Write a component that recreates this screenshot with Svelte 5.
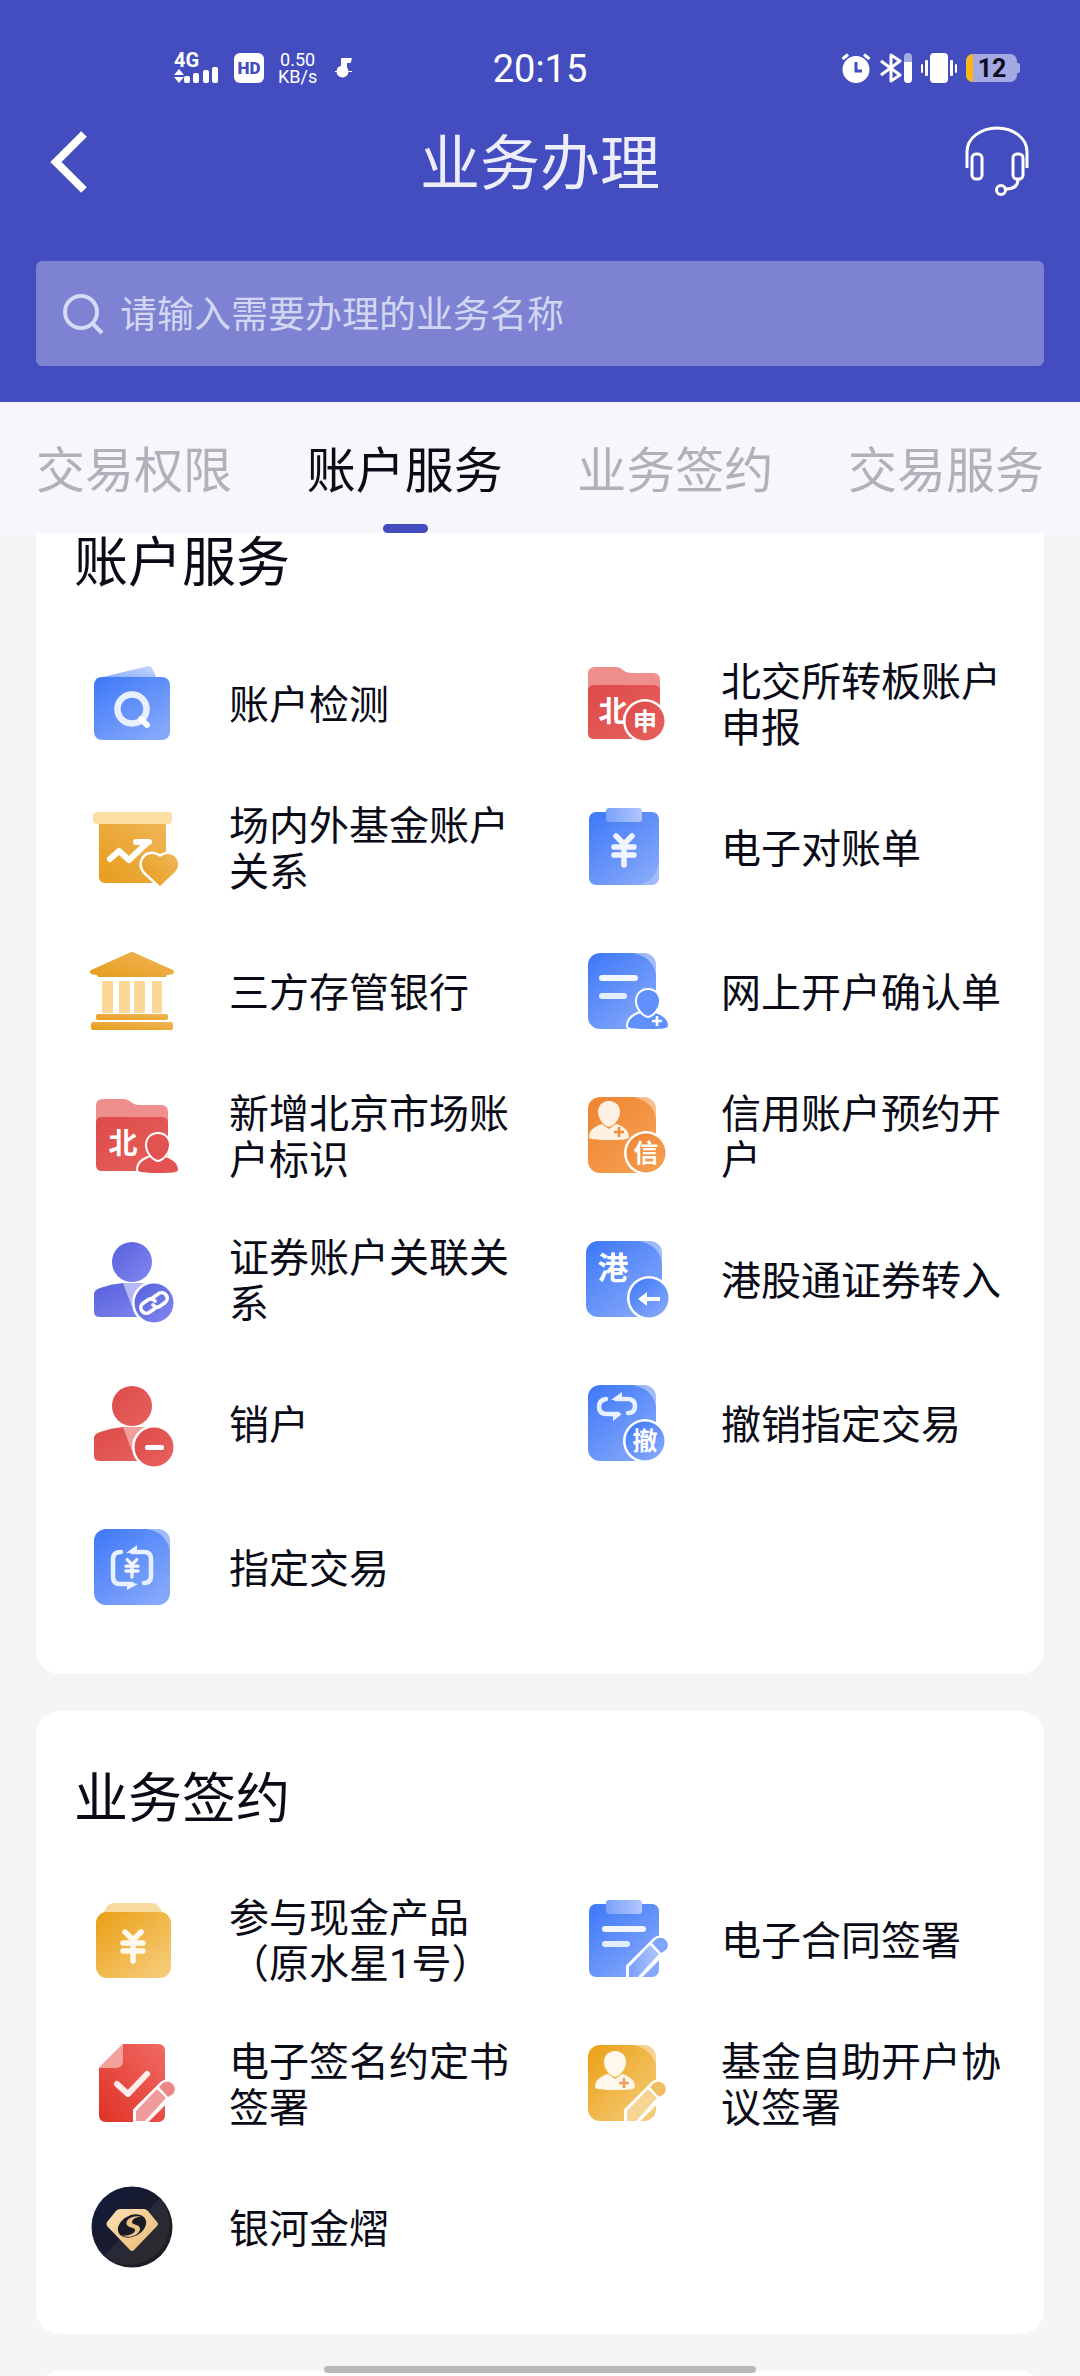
<script lang="ts">
  interface Service {
    label: string;
    icon: string;
  }

  interface Group {
    title: string;
    items: Service[];
  }

  const tabs = ['交易权限', '账户服务', '业务签约', '交易服务'];

  const groups: Group[] = [
    {
      title: '账户服务',
      items: [
        { label: '账户检测', icon: 'check-account' },
        { label: '北交所转板账户申报', icon: 'folder-report' },
        { label: '场内外基金账户关系', icon: 'fund' },
        { label: '电子对账单', icon: 'statement' },
        { label: '三方存管银行', icon: 'bank' },
        { label: '网上开户确认单', icon: 'confirm' },
        { label: '新增北京市场账户标识', icon: 'folder-user' },
        { label: '信用账户预约开户', icon: 'credit' },
        { label: '证券账户关联关系', icon: 'user-link' },
        { label: '港股通证券转入', icon: 'hk-in' },
        { label: '销户', icon: 'user-close' },
        { label: '撤销指定交易', icon: 'revoke' },
        { label: '指定交易', icon: 'assign' },
      ],
    },
    {
      title: '业务签约',
      items: [
        { label: '参与现金产品（原水星1号）', icon: 'cash' },
        { label: '电子合同签署', icon: 'contract' },
        { label: '电子签名约定书签署', icon: 'signature' },
        { label: '基金自助开户协议签署', icon: 'fund-sign' },
        { label: '银河金熠', icon: 'galaxy' },
      ],
    },
  ];

  let activeTab = $state(1);
  let query = $state('');
</script>

{#snippet yen(x: number, y: number, s: number)}
  <path
    transform="translate({x} {y}) scale({s})"
    d="M-8 -14 L0 -6 L8 -14 M-10 -3 H10 M-10 5 H10 M0 -6 V15"
    fill="none"
    stroke="#fff"
    stroke-opacity="0.9"
    stroke-width="5.5"
    stroke-linecap="round"
    stroke-linejoin="round"
  />
{/snippet}

{#snippet sheen(x: number, y: number)}
  <path transform="translate({x} {y})" d="M-23 0 H-11 Q0 0 0 11 V22 Q-3 4 -23 0 Z" fill="#fff" fill-opacity="0.4" />
{/snippet}

{#snippet badge(x: number, y: number, fill: string)}
  <circle cx={x} cy={y} r="22" fill="#fff" />
  <circle cx={x} cy={y} r="19.5" {fill} />
{/snippet}

{#snippet person(x: number, y: number, fill: string, outline: string)}
  <g transform="translate({x} {y})" {fill} stroke={outline} stroke-width="4" paint-order="stroke" stroke-linejoin="round">
    <path d="M-20 24 C-20 17 -14 13 -7 11 L0 16 L7 11 C14 13 20 17 20 24 C20 27 9 27 0 27 C-9 27 -20 27 -20 24 Z" />
    <path d="M0 -12 C7 -12 11 -7 11 -1 C11 6 5 13 0 14 C-5 13 -11 6 -11 -1 C-11 -7 -7 -12 0 -12 Z" />
  </g>
{/snippet}

{#snippet plus(x: number, y: number, color: string)}
  <path d="M{x - 5} {y} H{x + 5} M{x} {y - 5} V{y + 5}" stroke={color} stroke-width="2.6" />
{/snippet}

{#snippet pen(x: number, body: string, tip: string)}
  <g transform="translate({x} 0)">
    <path d="M51 85 V73 L78 46 A9 9 0 0 1 92 57 L64 85 Z" fill="#fff" stroke="#fff" stroke-width="2" />
    <path d="M53 84 V74 L74 52 L83 61 L62 84 Z" fill={body} />
    <path d="M76 50 L80 46 A7.5 7.5 0 0 1 90 57 L85 60 Z" fill={tip} />
  </g>
{/snippet}

{#snippet folder()}
  <path d="M12 40 V17 Q12 10 19 10 H40 Q44 10 47 13 Q50 16 54 16 H77 Q84 16 84 23 V40 Z" fill="#ef8f8d" />
  <path d="M12 34 Q12 28 18 28 H78 Q84 28 84 34 V76 Q84 82 78 82 H18 Q12 82 12 76 Z" fill="url(#red)" />
{/snippet}

{#snippet bust(fill: string, light: string)}
  <circle cx="48" cy="29" r="20" {fill} />
  <path d="M10 61 Q10 57 16 55 Q27 51 39 50 H61 L72 84 H16 Q10 84 10 79 Z" {fill} />
  <path d="M39 50 H61 L48 74 Z" fill={light} />
  {@render badge(70, 70, fill)}
{/snippet}

{#snippet serviceIcon(name: string)}
  <svg class="service-icon" viewBox="0 0 96 96" aria-hidden="true">
    {#if name === 'check-account'}
      <path d="M11 22 L64 9 Q67 9 68 11 L73 22 Z" fill="url(#pale-blue)" />
      <rect x="10" y="20" width="76" height="63" rx="8" fill="url(#blue)" />
      <circle cx="48" cy="52" r="14.5" fill="none" stroke="#e8f0ff" stroke-width="6.5" />
      <path d="M57 62 L63 68" stroke="#fff" stroke-width="6" stroke-linecap="round" />
    {:else if name === 'folder-report'}
      {@render folder()}
      <text class="glyph" x="37" y="65" font-size="29">北</text>
      {@render badge(69, 64, 'url(#red)')}
      <text class="glyph" x="69" y="73" font-size="24">申</text>
    {:else if name === 'fund'}
      <rect x="15" y="18" width="67" height="64" rx="6" fill="url(#gold-deep)" />
      <rect x="9" y="11" width="79" height="12" rx="4" fill="#fbdfa3" />
      <path
        d="M26 58 L35 50 L45 59 L64 41 M52 41 H65"
        fill="none"
        stroke="#fff"
        stroke-width="6"
        stroke-linecap="round"
        stroke-linejoin="round"
      />
      <path
        d="M76 85 L61 71 C54 63 60 53 68 53 C72 53 74 55 76 56 C78 55 80 53 84 53 C92 53 98 63 91 71 Z"
        fill="url(#gold-deep)"
        stroke="#fff"
        stroke-width="5"
        paint-order="stroke"
      />
    {:else if name === 'statement'}
      <rect x="13" y="11" width="70" height="73" rx="7" fill="url(#blue)" />
      <path d="M83 60 V77 Q83 84 76 84 H65 Q80 78 83 60 Z" fill="#fff" fill-opacity="0.22" />
      <rect x="30" y="7" width="36" height="14" rx="3" fill="url(#pale-blue-h)" />
      {@render yen(48, 49, 1)}
    {:else if name === 'bank'}
      <path
        d="M45 8 Q48 6 51 8 L89 25 Q91 27 89 29 L83 30 L82 32 H14 L13 30 L7 29 Q5 27 7 25 Z"
        fill="url(#gold-deep)"
      />
      <path d="M18 36 H29 V68 H18 Z M35 36 H46 V68 H35 Z M50 36 H61 V68 H50 Z M68 36 H78 V68 H68 Z" fill="#fbd898" />
      <rect x="12" y="69" width="72" height="6" rx="2" fill="url(#gold-deep)" />
      <rect x="7" y="77" width="82" height="8" rx="2" fill="url(#gold-deep)" />
    {:else if name === 'confirm'}
      <rect x="12" y="8" width="68" height="76" rx="12" fill="url(#blue)" />
      {@render sheen(80, 8)}
      <rect x="23" y="30" width="39" height="6" rx="3" fill="#f1f6ff" />
      <rect x="23" y="48" width="28" height="6" rx="3" fill="#e3edff" />
      {@render person(72, 57, '#5f90fb', '#fff')}
      {@render plus(81, 76, '#fff')}
    {:else if name === 'folder-user'}
      {@render folder()}
      <text class="glyph" x="39" y="65" font-size="29">北</text>
      {@render person(74, 57, '#e25250', '#fff')}
    {:else if name === 'credit'}
      <rect x="12" y="8" width="68" height="76" rx="12" fill="url(#orange)" />
      {@render sheen(80, 8)}
      {@render person(33, 24, '#fdf1e4', 'none')}
      {@render plus(43, 43, '#f08c3a')}
      {@render badge(70, 64, 'url(#orange)')}
      <text class="glyph" x="70" y="73" font-size="25">信</text>
    {:else if name === 'user-link'}
      {@render bust('url(#violet)', '#b5b9f7')}
      <g transform="translate(70 70) rotate(-35)" fill="none" stroke="#fff" stroke-width="3.6" stroke-linecap="round">
        <path d="M-2 5 H-9 A5.5 5.5 0 0 1 -9 -6 H-3 Q1 -6 2 -1" />
        <path d="M2 -5 H9 A5.5 5.5 0 0 1 9 6 H3 Q-1 6 -2 1" />
      </g>
    {:else if name === 'hk-in'}
      <rect x="10" y="8" width="76" height="76" rx="12" fill="url(#blue)" />
      {@render sheen(86, 8)}
      <text class="glyph" x="37" y="46" font-size="31">港</text>
      {@render badge(73, 65, 'url(#blue)')}
      <path d="M68 66 H84" stroke="#fff" stroke-width="4" />
      <path d="M62 66 L71 59 V73 Z" fill="#fff" />
    {:else if name === 'user-close'}
      {@render bust('url(#red)', '#f19f9c')}
      <rect x="61" y="68" width="19" height="5" rx="2" fill="#fff" />
    {:else if name === 'revoke'}
      <rect x="12" y="8" width="68" height="76" rx="12" fill="url(#blue)" />
      {@render sheen(80, 8)}
      <g fill="none" stroke="#e8f1ff" stroke-width="4.5" stroke-linecap="round">
        <path d="M30 22 Q23 23 23 30 Q23 37 31 37 H42" />
        <path d="M52 36 Q59 36 59 29 Q59 22 51 22 H40" />
      </g>
      <path d="M35 23 L46 15 V23 Z M46 37 L37 44 V36 Z" fill="#e8f1ff" />
      {@render badge(69, 64, 'url(#blue)')}
      <text class="glyph" x="69" y="73" font-size="25">撤</text>
    {:else if name === 'assign'}
      <rect x="10" y="8" width="76" height="76" rx="12" fill="url(#blue)" />
      {@render sheen(86, 8)}
      <g fill="none" stroke="#e8f1ff" stroke-width="4.5" stroke-linecap="round">
        <path d="M37 31 Q29 31 29 38 V56 Q29 63 36 63 H48" />
        <path d="M60 62 Q67 62 67 55 V38 Q67 31 60 31 H48" />
      </g>
      <path d="M42 32 L53 24 V32 Z M54 63 L43 69 V61 Z" fill="#e8f1ff" />
      {@render yen(48, 47, 0.6)}
    {:else if name === 'cash'}
      <path d="M17 26 Q22 10 30 10 H68 Q76 10 81 26 Z" fill="#f8dba1" />
      <rect x="12" y="19" width="75" height="66" rx="11" fill="url(#gold)" />
      {@render yen(49, 53, 1)}
    {:else if name === 'contract'}
      <rect x="13" y="11" width="70" height="73" rx="7" fill="url(#blue)" />
      <rect x="30" y="7" width="36" height="14" rx="3" fill="url(#pale-blue-h)" />
      <rect x="26" y="33" width="44" height="6" rx="3" fill="#f1f6ff" />
      <rect x="26" y="48" width="28" height="6" rx="3" fill="#e3edff" />
      {@render pen(0, 'url(#pale-blue-h)', '#7fa5fb')}
    {:else if name === 'signature'}
      <path d="M39 7 H74 Q81 7 81 14 V78 Q81 85 74 85 H22 Q15 85 15 78 V31 Z" fill="url(#scarlet)" />
      <path d="M39 7 V24 Q39 31 32 31 H15 Z" fill="#f6a09c" />
      <path
        d="M33 47 L44 57 L63 37"
        fill="none"
        stroke="#ffeceb"
        stroke-width="6"
        stroke-linecap="round"
        stroke-linejoin="round"
      />
      {@render pen(-1, '#f19a9c', '#ee8587')}
    {:else if name === 'fund-sign'}
      <rect x="12" y="8" width="68" height="76" rx="12" fill="url(#gold)" />
      {@render sheen(80, 8)}
      {@render person(39, 26, '#fef8ec', 'none')}
      {@render plus(48, 46, '#ef9a62')}
      {@render pen(-2, '#f6d493', '#efbd62')}
    {:else if name === 'galaxy'}
      <circle cx="48" cy="46" r="40.5" fill="url(#night)" />
      <path d="M76 17 A40.5 40.5 0 0 1 20 75 L33 61 Z" fill="#fff" fill-opacity="0.06" />
      <path
        d="M36 28 H60 Q62 28 64 30 L73 41 Q75 43 73 45 L50 69 Q48 71 46 69 L23 45 Q22 43 23 41 L32 30 Q34 28 36 28 Z"
        fill="url(#cream)"
      />
      <g transform="translate(48 45)">
        <ellipse rx="15" ry="10.5" transform="rotate(-28)" fill="#1b1b26" />
        <path
          d="M11 -9 C1 -12 -8 -6 -5 -1 C-3 2 4 1 3 5 C2 8 -6 11 -11 9 C-2 14 9 8 8 2 C7 -2 0 -1 0 -4 C0 -7 6 -10 11 -9 Z"
          fill="#ecc388"
        />
      </g>
    {/if}
  </svg>
{/snippet}

<svg class="defs" width="0" height="0" aria-hidden="true">
  <defs>
    <linearGradient id="blue" x1="0" y1="0" x2="0.8" y2="1">
      <stop offset="0" stop-color="#3d77f8" />
      <stop offset="1" stop-color="#86a9fa" />
    </linearGradient>
    <linearGradient id="pale-blue" x1="0" y1="1" x2="1" y2="0">
      <stop offset="0" stop-color="#7ea4fb" />
      <stop offset="1" stop-color="#cbdafd" />
    </linearGradient>
    <linearGradient id="pale-blue-h" x1="0" y1="0" x2="1" y2="0">
      <stop offset="0" stop-color="#79a0fb" />
      <stop offset="1" stop-color="#b2c8fd" />
    </linearGradient>
    <linearGradient id="red" x1="0" y1="0" x2="1" y2="1">
      <stop offset="0" stop-color="#dc4a48" />
      <stop offset="1" stop-color="#e8625f" />
    </linearGradient>
    <linearGradient id="scarlet" x1="1" y1="0" x2="0" y2="1">
      <stop offset="0" stop-color="#f06a64" />
      <stop offset="1" stop-color="#e03225" />
    </linearGradient>
    <linearGradient id="orange" x1="0" y1="0" x2="1" y2="1">
      <stop offset="0" stop-color="#ee8430" />
      <stop offset="1" stop-color="#f6a256" />
    </linearGradient>
    <linearGradient id="gold" x1="0" y1="0" x2="1" y2="1">
      <stop offset="0" stop-color="#eb9f14" />
      <stop offset="1" stop-color="#f6cf80" />
    </linearGradient>
    <linearGradient id="gold-deep" x1="0" y1="1" x2="1" y2="0">
      <stop offset="0" stop-color="#e79d1b" />
      <stop offset="1" stop-color="#efb65a" />
    </linearGradient>
    <linearGradient id="violet" x1="0" y1="0" x2="1" y2="1">
      <stop offset="0" stop-color="#5660da" />
      <stop offset="1" stop-color="#8288f2" />
    </linearGradient>
    <linearGradient id="night" x1="0" y1="0" x2="1" y2="1">
      <stop offset="0" stop-color="#111b3c" />
      <stop offset="1" stop-color="#221c1c" />
    </linearGradient>
    <linearGradient id="cream" x1="0" y1="0" x2="1" y2="1">
      <stop offset="0" stop-color="#ffe0b4" />
      <stop offset="1" stop-color="#e8b974" />
    </linearGradient>
  </defs>
</svg>

<div class="page">
  <header class="header">
    <div class="status-bar">
      <div class="status-left">
        <svg class="signal" viewBox="0 0 46 40" fill="#fff" aria-hidden="true">
          <text x="0" y="19" font-size="20" font-weight="700">4G</text>
          <path d="M0 27 L5 21 L10 27 Z M0 29 H10 L5 35 Z" />
          <rect x="10" y="28" width="6" height="7" rx="2" />
          <rect x="19" y="25" width="6" height="10" rx="2" />
          <rect x="29" y="22" width="6" height="13" rx="2" />
          <rect x="38" y="19" width="6" height="16" rx="2" />
        </svg>
        <svg class="hd" viewBox="0 0 30 30" aria-hidden="true">
          <rect width="30" height="30" rx="6" fill="#fff" />
          <text x="15" y="21" font-size="17" font-weight="900" text-anchor="middle" fill="#444dbf">HD</text>
        </svg>
        <div class="speed">
          <span>0.50</span>
          <span>KB/s</span>
        </div>
        <svg class="note" viewBox="0 0 18 22" fill="#fff" aria-hidden="true">
          <path d="M6 2 Q6 1 7 1 H17 L16 5 Q16 6 15 6 H12 V12 H6 Z" />
          <circle cx="7.5" cy="14.5" r="6" />
          <rect x="0" y="14" width="17" height="1" />
        </svg>
      </div>
      <span class="time">20:15</span>
      <div class="status-right">
        <svg class="alarm" viewBox="0 0 30 30" aria-hidden="true">
          <circle cx="15" cy="16.5" r="13.5" fill="#fff" />
          <path d="M1.5 6 L7 1.5 M23 1.5 L28.5 6" stroke="#fff" stroke-width="3" />
          <path d="M15 9 V18 H21" fill="none" stroke="#444dbf" stroke-width="3" />
        </svg>
        <svg class="bluetooth" viewBox="0 0 32 30" aria-hidden="true">
          <path d="M1 8 L20 22 L11 28 V2 L20 8 L1 22" fill="none" stroke="#fff" stroke-width="3" stroke-linejoin="round" />
          <rect x="24" y="0" width="8" height="30" rx="4" fill="#a5a9e2" />
          <path d="M24 9 H32 V26 A4 4 0 0 1 24 26 Z" fill="#fff" />
        </svg>
        <svg class="vibrate" viewBox="0 0 36 30" fill="#fff" aria-hidden="true">
          <rect x="9" y="0" width="18" height="30" rx="4" />
          <rect x="0" y="11" width="2" height="9" rx="1" />
          <rect x="4" y="7" width="3" height="16" rx="1" />
          <rect x="29" y="7" width="3" height="16" rx="1" />
          <rect x="34" y="11" width="2" height="9" rx="1" />
        </svg>
        <svg class="battery" viewBox="0 0 54 28" aria-hidden="true">
          <rect x="48" y="9" width="6" height="10" rx="2" fill="#a5a9e2" />
          <rect width="51" height="28" rx="7" fill="#a5a9e2" />
          <path d="M7 0 V28 A7 7 0 0 1 0 21 V7 A7 7 0 0 1 7 0 Z" fill="#fdb515" />
          <text x="26" y="23" font-size="25" font-weight="700" text-anchor="middle" fill="#0c0c24">12</text>
        </svg>
      </div>
    </div>

    <div class="nav">
      <button class="nav-btn" aria-label="返回">
        <svg viewBox="0 0 64 72" aria-hidden="true">
          <path d="M48 8 L20 36 L48 64" fill="none" stroke="#fff" stroke-width="8" />
        </svg>
      </button>
      <h1>业务办理</h1>
      <button class="nav-btn service-btn" aria-label="客服">
        <svg viewBox="0 0 64 72" fill="none" stroke="#fff" stroke-width="3" aria-hidden="true">
          <path d="M2 42 V26 C2 11 17 2 32 2 C47 2 62 11 62 26 V42" />
          <rect x="7" y="28" width="10" height="25" rx="4" />
          <rect x="48" y="28" width="10" height="25" rx="4" />
          <path d="M53 53 C53 60 49 63 41 63" />
          <circle cx="36" cy="64" r="4.5" />
        </svg>
      </button>
    </div>

    <label class="search">
      <svg viewBox="0 0 42 42" fill="none" stroke="#d7daf4" stroke-width="4" aria-hidden="true">
        <circle cx="19" cy="19" r="16" />
        <path d="M30 30 L40 40" />
      </svg>
      <input type="text" bind:value={query} placeholder="请输入需要办理的业务名称" aria-label="搜索业务" />
    </label>
  </header>

  <nav class="tabs">
    {#each tabs as tab, i (tab)}
      <button class="tab" class:active={i === activeTab} onclick={() => (activeTab = i)}>{tab}</button>
    {/each}
  </nav>

  <main class="content">
    {#each groups as group (group.title)}
      <section class="card">
        <h2>{group.title}</h2>
        <div class="services">
          {#each group.items as item (item.label)}
            <button class="service">
              {@render serviceIcon(item.icon)}
              <span>{item.label}</span>
            </button>
          {/each}
        </div>
      </section>
    {/each}
    <section class="card next"></section>
  </main>

  <div class="home-indicator"></div>
</div>

<style>
  :global(body) {
    background: #f3f5f7;
  }

  .defs {
    position: absolute;
  }

  .page {
    position: relative;
    display: flex;
    flex-direction: column;
    height: 100vh;
    overflow: hidden;
    background: #f3f5f7;
    color: #0b0b17;
    font-family: Roboto, 'Noto Sans CJK SC', sans-serif;
  }

  button {
    border: none;
    padding: 0;
    background: none;
    color: inherit;
    font: inherit;
    cursor: pointer;
  }

  .header {
    flex-shrink: 0;
    padding: 48px 36px 36px;
    background: #444dbf;
    color: #fff;
  }

  .status-bar {
    display: grid;
    grid-template-columns: 1fr auto 1fr;
    align-items: center;
    height: 40px;
    padding: 0 24px;
  }

  .status-left,
  .status-right {
    display: flex;
    align-items: center;
  }

  .status-left {
    gap: 14px;
    padding-left: 114px;
  }

  .status-right {
    justify-content: flex-end;
    gap: 9px;
  }

  .signal {
    width: 46px;
    height: 40px;
  }

  .hd,
  .alarm {
    width: 30px;
    height: 30px;
  }

  .speed {
    display: flex;
    flex-direction: column;
    align-items: center;
    font-size: 18px;
    line-height: 17px;
  }

  .note {
    width: 18px;
    height: 22px;
    margin-left: 4px;
  }

  .time {
    padding-top: 2px;
    font-size: 38px;
    line-height: 38px;
  }

  .bluetooth {
    width: 32px;
    height: 30px;
  }

  .vibrate {
    width: 36px;
    height: 30px;
  }

  .battery {
    width: 54px;
    height: 28px;
  }

  .nav {
    display: grid;
    grid-template-columns: 1fr auto 1fr;
    align-items: center;
    height: 148px;
  }

  .nav-btn,
  .nav-btn svg {
    display: block;
    width: 64px;
    height: 72px;
  }

  .service-btn {
    justify-self: end;
    margin-right: 15px;
  }

  h1 {
    margin: 0;
    padding-top: 6px;
    color: #edeefa;
    font-size: 60px;
    font-weight: 400;
    line-height: 72px;
  }

  .search {
    display: flex;
    align-items: center;
    gap: 16px;
    height: 105px;
    margin-top: 25px;
    padding: 0 26px;
    border-radius: 6px;
    background: #7d83d2;
  }

  .search svg {
    flex-shrink: 0;
    width: 42px;
    height: 42px;
  }

  .search input {
    flex: 1;
    min-width: 0;
    border: none;
    padding: 4px 0 0;
    outline: none;
    background: none;
    color: #fff;
    font: inherit;
    font-size: 37px;
  }

  .search input::placeholder {
    color: #d3d6f3;
    opacity: 1;
  }

  .tabs {
    display: flex;
    flex-shrink: 0;
    justify-content: space-between;
    height: 131px;
    padding: 0 36px;
    background: #f7f7fb;
  }

  .tab {
    position: relative;
    padding-top: 8px;
    color: #b1b1bb;
    font-size: 49px;
    line-height: 123px;
  }

  .tab.active {
    color: #0b0b17;
  }

  .tab.active::after {
    content: '';
    position: absolute;
    bottom: 0;
    left: 50%;
    width: 45px;
    height: 9px;
    margin-left: -22px;
    border-radius: 5px;
    background: #444dbf;
  }

  .content {
    flex: 1;
    min-height: 0;
    padding: 0 36px;
    overflow: hidden;
  }

  .card {
    margin-bottom: 37px;
    padding: 14px 24px 33px 38px;
    border-radius: 24px;
    background: #fff;
  }

  /* the list is scrolled a little way under the tabs */
  .card:first-child {
    margin-top: -58px;
  }

  .card.next {
    height: 144px;
  }

  h2 {
    margin: 0;
    padding-top: 6px;
    font-size: 54px;
    font-weight: 400;
    line-height: 138px;
  }

  .services {
    display: grid;
    grid-template-columns: 1fr 1fr;
    grid-auto-rows: 144px;
    column-gap: 48px;
    margin-left: 10px;
  }

  .service {
    display: flex;
    align-items: center;
    gap: 49px;
    font-size: 40px;
    line-height: 46px;
    text-align: left;
  }

  .service span {
    padding-top: 2px;
  }

  .service-icon {
    flex-shrink: 0;
    width: 96px;
    height: 96px;
  }

  .glyph {
    fill: #fff;
    font-weight: 700;
    text-anchor: middle;
  }

  .home-indicator {
    position: absolute;
    bottom: 3px;
    left: 30%;
    width: 40%;
    height: 7px;
    border-radius: 4px;
    background: #b9b9b9;
  }
</style>
